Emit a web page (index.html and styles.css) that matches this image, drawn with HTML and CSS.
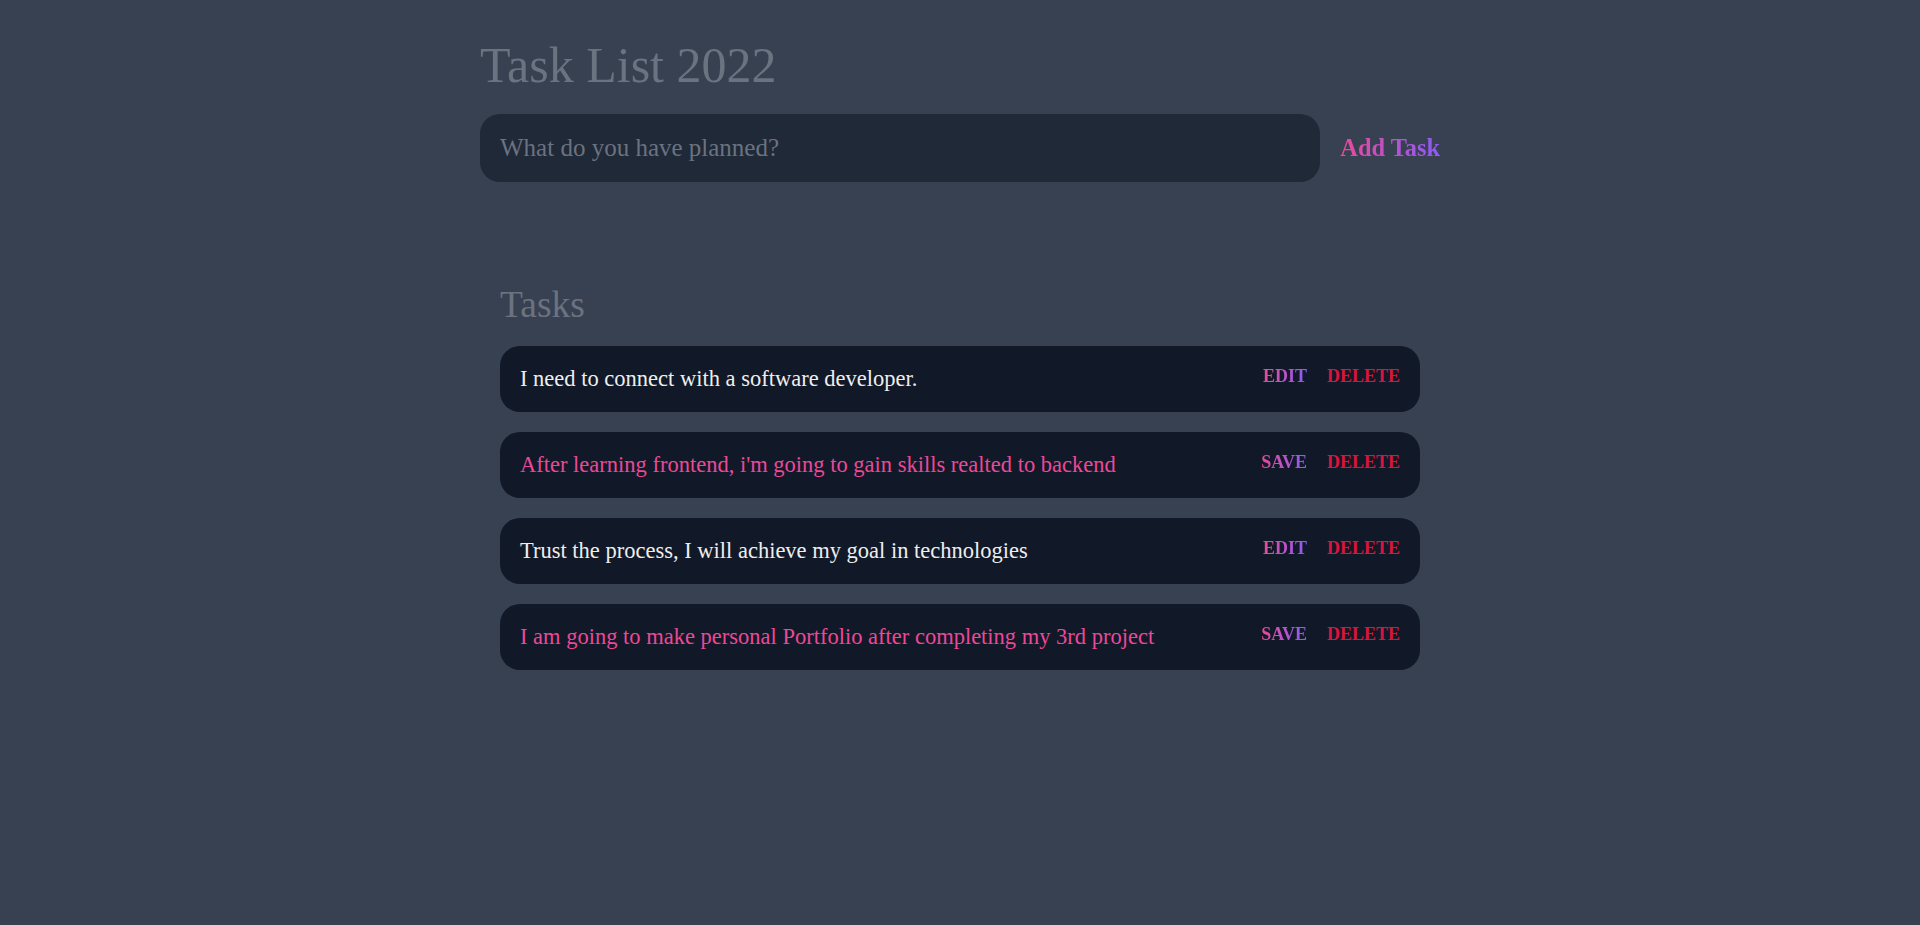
FILE: index.html
```html
<!DOCTYPE html>
<html lang="en">
<head>
<meta charset="utf-8">
<title>Task List 2022</title>
<link rel="stylesheet" href="styles.css">
</head>
<body>
<header class="header">
  <h1 class="title">Task List 2022</h1>
  <form class="new-task-form">
    <input class="new-task-input" type="text" placeholder="What do you have planned?">
    <button class="new-task-submit" type="button">Add Task</button>
  </form>
</header>
<main class="main">
  <section class="task-list">
    <h2 class="task-list-title">Tasks</h2>
    <div class="tasks">
      <div class="task">
        <span class="task-text">I need to connect with a software developer.</span>
        <div class="actions">
          <button class="btn btn-edit" type="button">Edit</button>
          <button class="btn btn-delete" type="button">Delete</button>
        </div>
      </div>
      <div class="task">
        <span class="task-text task-text-editing">After learning frontend, i'm going to gain skills realted to backend</span>
        <div class="actions">
          <button class="btn btn-edit" type="button">Save</button>
          <button class="btn btn-delete" type="button">Delete</button>
        </div>
      </div>
      <div class="task">
        <span class="task-text">Trust the process, I will achieve my goal in technologies</span>
        <div class="actions">
          <button class="btn btn-edit" type="button">Edit</button>
          <button class="btn btn-delete" type="button">Delete</button>
        </div>
      </div>
      <div class="task">
        <span class="task-text task-text-editing">I am going to make personal Portfolio after completing my 3rd project</span>
        <div class="actions">
          <button class="btn btn-edit" type="button">Save</button>
          <button class="btn btn-delete" type="button">Delete</button>
        </div>
      </div>
    </div>
  </section>
</main>
</body>
</html>
```
FILE: styles.css
```css
* {
  box-sizing: border-box;
  margin: 0;
  padding: 0;
}

html, body {
  height: 100%;
}

body {
  background-color: #374151;
  font-family: "Liberation Serif", "Times New Roman", serif;
  color: #eeeeee;
}

input, button {
  appearance: none;
  border: none;
  outline: none;
  background: none;
  font-family: inherit;
}

.header {
  max-width: 1000px;
  width: 100%;
  margin: 0 auto;
  padding: 36px 20px 0;
}

.title {
  font-size: 50px;
  line-height: 58px;
  font-weight: 400;
  color: #6b7280;
  margin-bottom: 20px;
}

.new-task-form {
  display: flex;
  align-items: center;
}

.new-task-input {
  flex: 1 1 0%;
  height: 68px;
  background-color: #1f2937;
  padding: 0 20px;
  border-radius: 20px;
  margin-right: 20px;
  color: #eeeeee;
  font-size: 25px;
}

.new-task-input::placeholder {
  color: #6b7280;
}

.new-task-submit {
  font-size: 24.4px;
  font-weight: 700;
  color: #ec4899;
  background-image: linear-gradient(to right, #ec4899, #8b5cf6);
  -webkit-background-clip: text;
  background-clip: text;
  -webkit-text-fill-color: transparent;
  cursor: pointer;
}

.main {
  max-width: 1000px;
  width: 100%;
  margin: 0 auto;
  padding: 0 20px;
}

.task-list {
  padding: 101px 20px 20px;
}

.task-list-title {
  font-size: 37.5px;
  line-height: 43px;
  font-weight: 400;
  color: #6b7280;
  margin-bottom: 20px;
}

.tasks {
  display: flex;
  flex-direction: column;
  gap: 20px;
}

.task {
  display: flex;
  justify-content: space-between;
  align-items: flex-start;
  background-color: #111827;
  padding: 20px;
  border-radius: 20px;
}

.task-text {
  color: #eeeeee;
  font-size: 22.5px;
  line-height: 26px;
}

.task-text-editing {
  color: #ec4899;
}

.actions {
  display: flex;
  gap: 20px;
}

.btn {
  font-size: 18px;
  font-weight: 700;
  text-transform: uppercase;
  cursor: pointer;
}

.btn-edit {
  color: #ec4899;
  background-image: linear-gradient(to right, #ec4899, #8b5cf6);
  -webkit-background-clip: text;
  background-clip: text;
  -webkit-text-fill-color: transparent;
}

.btn-delete {
  color: crimson;
}
```
